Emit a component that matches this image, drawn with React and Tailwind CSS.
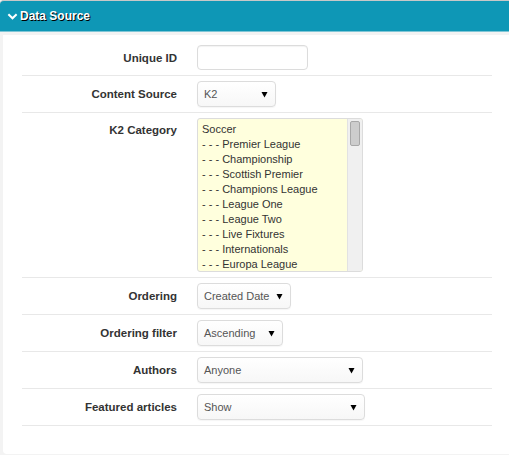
import React from "react";

const categories = [
  { name: "Soccer", depth: 0 },
  { name: "Premier League", depth: 1 },
  { name: "Championship", depth: 1 },
  { name: "Scottish Premier", depth: 1 },
  { name: "Champions League", depth: 1 },
  { name: "League One", depth: 1 },
  { name: "League Two", depth: 1 },
  { name: "Live Fixtures", depth: 1 },
  { name: "Internationals", depth: 1 },
  { name: "Europa League", depth: 1 },
];

function Row({ label, children, top }) {
  return (
    <div className="flex border-b border-[#e8e8e8] py-[5px]">
      <div
        className={`w-[155px] shrink-0 text-right text-[11.5px] font-bold leading-[18px] text-[#333] ${
          top ? "pt-[3px]" : "pt-[4px]"
        }`}
      >
        {label}
      </div>
      <div className="ml-[20px] flex-1">{children}</div>
    </div>
  );
}

function FakeSelect({ value, width }) {
  return (
    <div
      className={`flex h-[26px] items-center justify-between whitespace-nowrap rounded-[4px] border border-[#dcdcdc] bg-gradient-to-b from-white to-[#f7f7f7] pl-[6px] pr-[7px] text-[11px] text-[#555] shadow-[0_1px_1px_rgba(0,0,0,0.04)] ${width}`}
    >
      <span>{value}</span>
      <svg width="7" height="7" viewBox="0 0 7 7">
        <path d="M0.5 1h6L3.5 6.5z" fill="#000" />
      </svg>
    </div>
  );
}

export default function App() {
  return (
    <div
      className="h-[455px] w-[509px] bg-[#f3f3f3]"
      style={{ fontFamily: '"Liberation Sans", Arial, sans-serif' }}
    >
      <div className="flex h-[32px] items-center rounded-tl-[4px] border-t border-[#c8c8c8] border-b border-b-[#7fc6d6] bg-[#0e97b6] pl-[7px] text-white">
        <svg width="11" height="11" viewBox="0 0 12 12" className="mr-[2px]">
          <path d="M1.5 3.5l4.5 4.5 4.5-4.5" fill="none" stroke="white" strokeWidth="2.2" />
        </svg>
        <span
          className="text-[12px] font-bold"
          style={{ textShadow: "1px 1px 0 #000" }}
        >
          Data Source
        </span>
      </div>

      <div className="mt-[3px] ml-[3px] h-[419px] rounded-bl-[4px] bg-white pt-[5px] pl-[19px] pr-[17px]">
        <Row label="Unique ID">
          <div className="h-[25px] w-[111px] rounded-[4px] border border-[#dcdcdc] bg-white shadow-[inset_0_1px_1px_rgba(0,0,0,0.05)]" />
        </Row>
        <Row label="Content Source">
          <FakeSelect value="K2" width="w-[79px]" />
        </Row>
        <Row label="K2 Category" top>
          <div className="flex h-[154px] w-[166px] overflow-hidden rounded-[3px] border border-[#dcdcdc] bg-[#ffffdd]">
            <div className="flex-1 pl-[4px] pt-[3px] text-[11px] leading-[15px] text-[#333]">
              {categories.map((c) => (
                <div key={c.name} className="whitespace-nowrap">
                  {c.depth ? "- - - " : ""}
                  {c.name}
                </div>
              ))}
            </div>
            <div className="w-[15px] border-l border-[#e2e2e2] bg-[#f0f0f0] pt-[2px] pl-[2px]">
              <div className="h-[25px] w-[10px] rounded-[2px] border border-[#a8a8a8] bg-[#cdcdcd]" />
            </div>
          </div>
        </Row>
        <Row label="Ordering">
          <FakeSelect value="Created Date" width="w-[94px]" />
        </Row>
        <Row label="Ordering filter">
          <FakeSelect value="Ascending" width="w-[86px]" />
        </Row>
        <Row label="Authors">
          <FakeSelect value="Anyone" width="w-[166px]" />
        </Row>
        <Row label="Featured articles">
          <FakeSelect value="Show" width="w-[168px]" />
        </Row>
      </div>
    </div>
  );
}
